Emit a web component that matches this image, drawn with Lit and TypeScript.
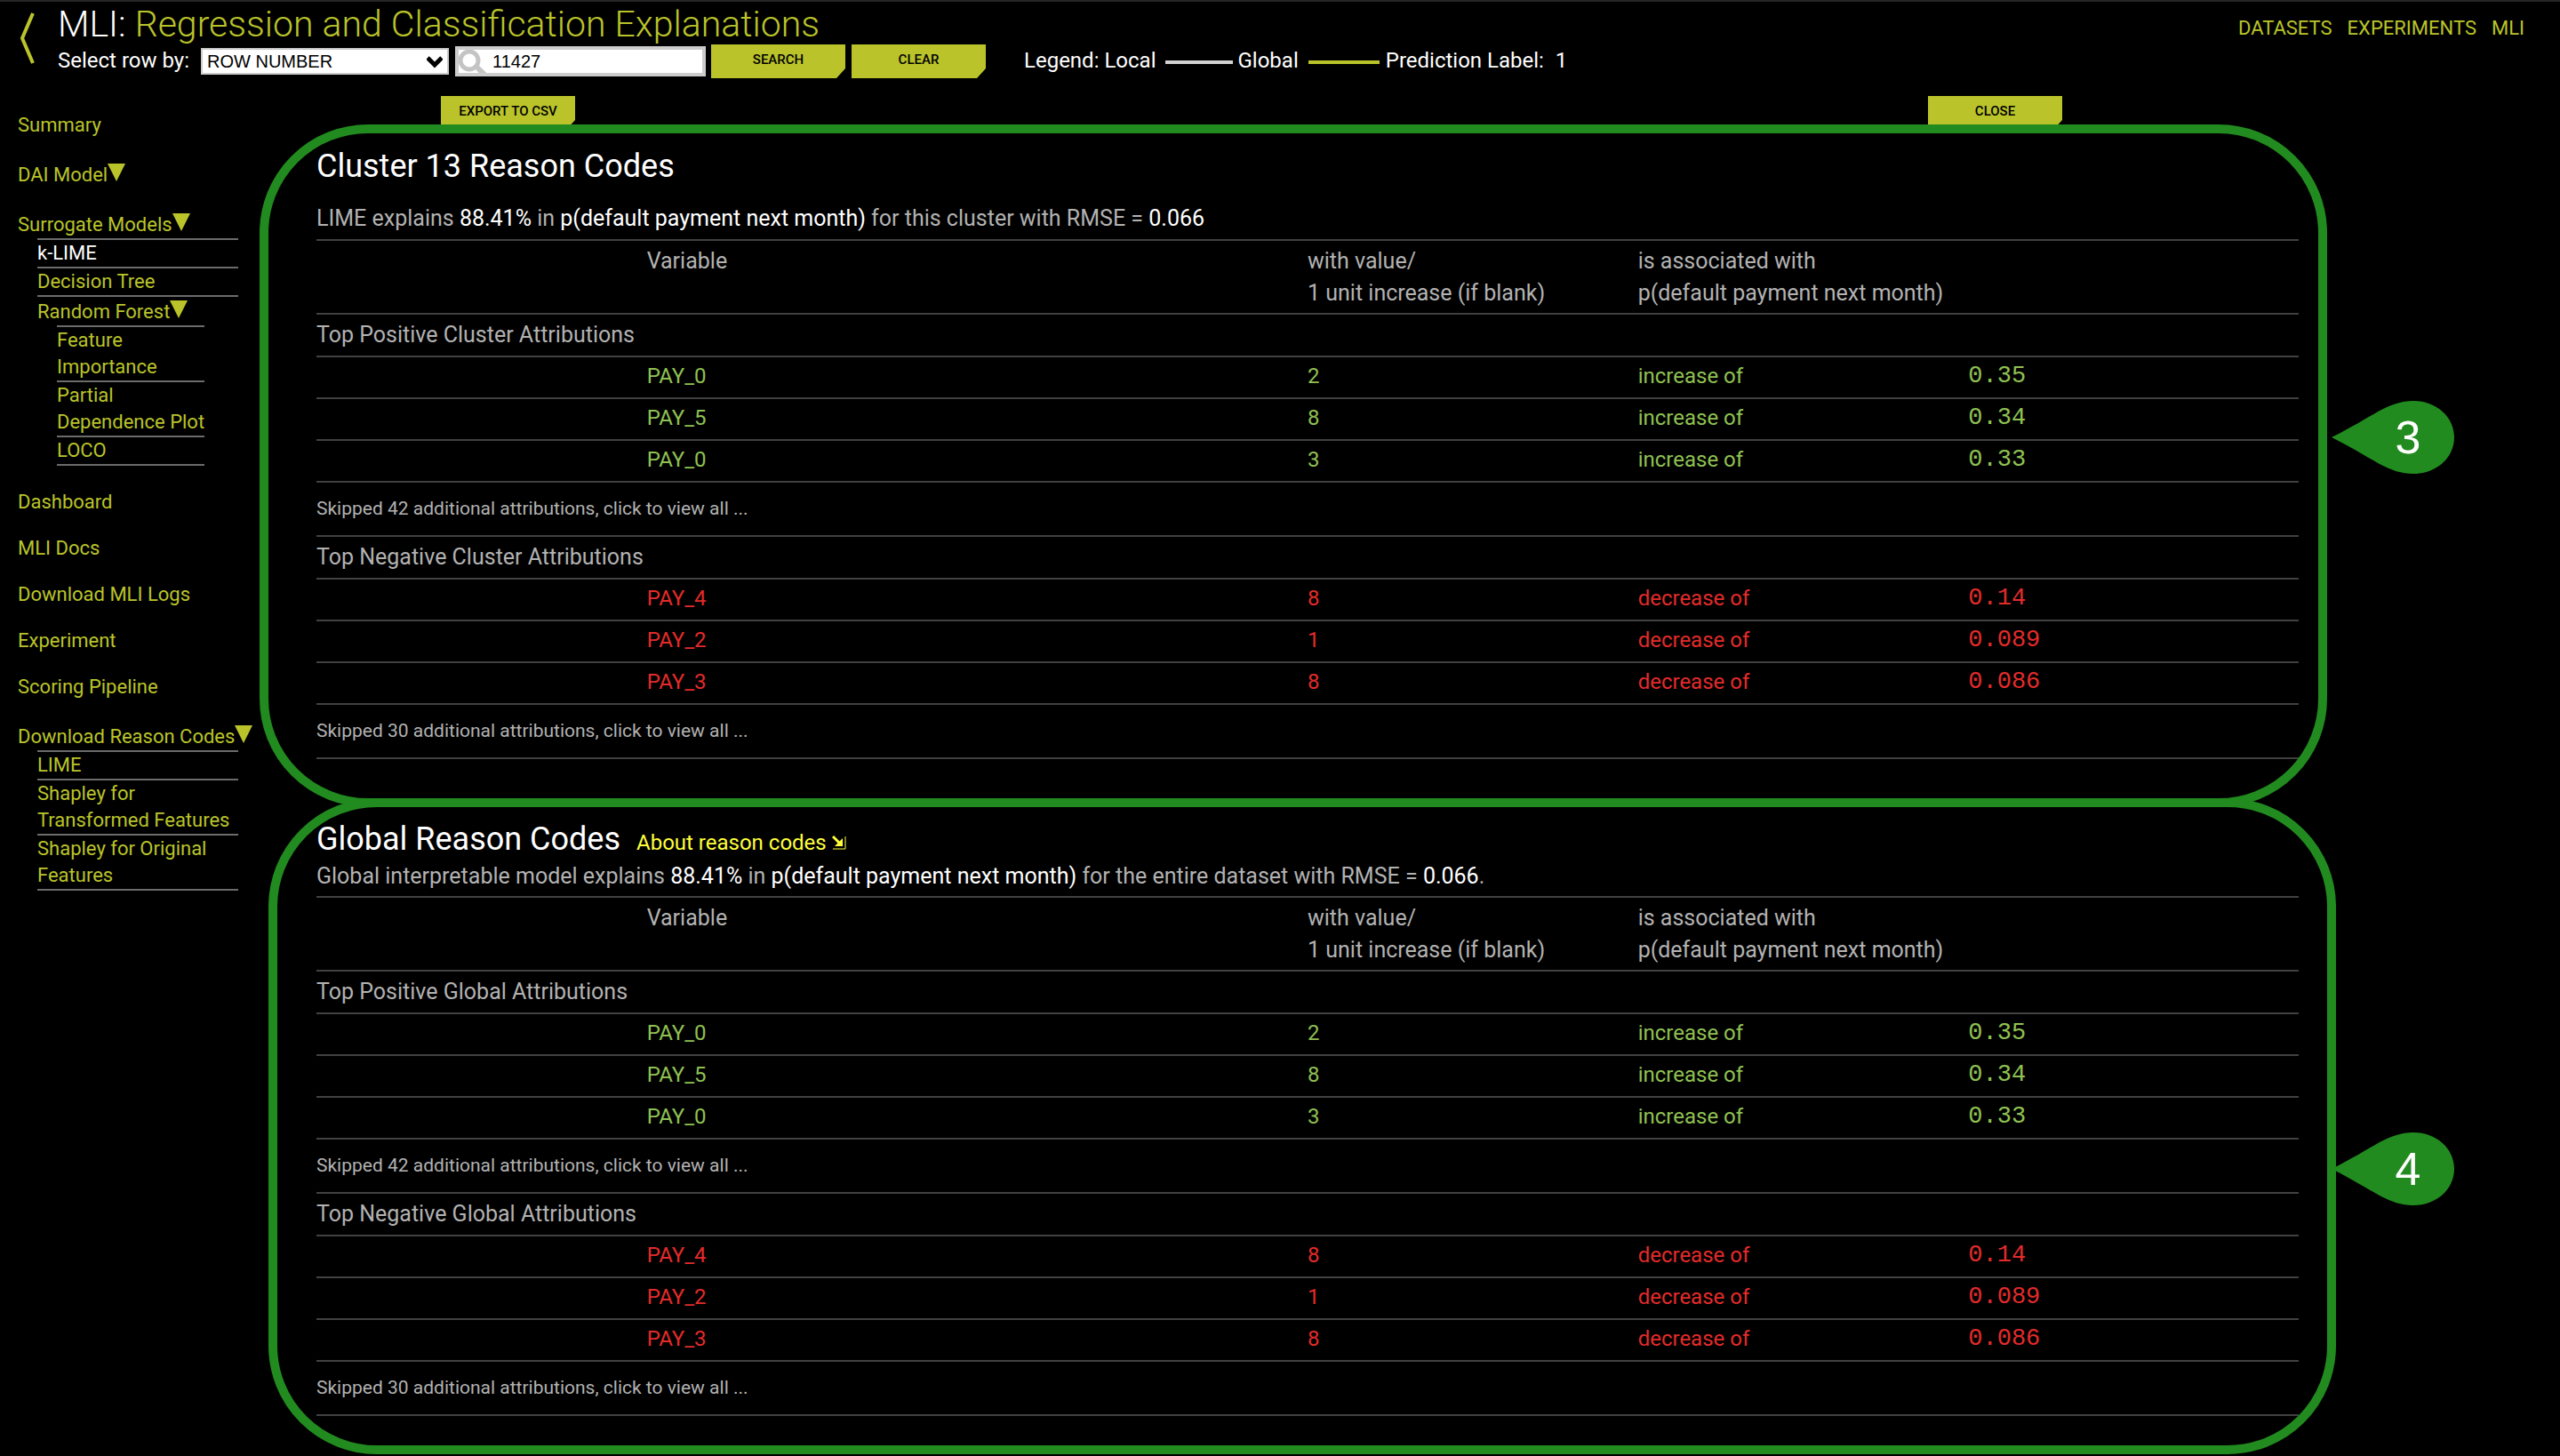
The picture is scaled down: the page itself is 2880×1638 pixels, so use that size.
import { LitElement, html, css, svg, nothing } from "lit";
import { customElement, property } from "lit/decorators.js";
import { classMap } from "lit/directives/class-map.js";

type Tone = "up" | "down";

interface Attribution {
  variable: string;
  value: string;
  effect: string;
  amount: string;
}

interface AttributionGroup {
  title: string;
  tone: Tone;
  rows: Attribution[];
  skipped: string;
}

const POSITIVE: Attribution[] = [
  { variable: "PAY_0", value: "2", effect: "increase of", amount: "0.35" },
  { variable: "PAY_5", value: "8", effect: "increase of", amount: "0.34" },
  { variable: "PAY_0", value: "3", effect: "increase of", amount: "0.33" },
];

const NEGATIVE: Attribution[] = [
  { variable: "PAY_4", value: "8", effect: "decrease of", amount: "0.14" },
  { variable: "PAY_2", value: "1", effect: "decrease of", amount: "0.089" },
  { variable: "PAY_3", value: "8", effect: "decrease of", amount: "0.086" },
];

const groupsFor = (scope: string): AttributionGroup[] => [
  {
    title: `Top Positive ${scope} Attributions`,
    tone: "up",
    rows: POSITIVE,
    skipped: "Skipped 42 additional attributions, click to view all ...",
  },
  {
    title: `Top Negative ${scope} Attributions`,
    tone: "down",
    rows: NEGATIVE,
    skipped: "Skipped 30 additional attributions, click to view all ...",
  },
];

@customElement("reason-table")
export class ReasonTable extends LitElement {
  @property({ attribute: false }) groups: AttributionGroup[] = [];

  static styles = css`
    :host {
      display: block;
    }
    .table {
      width: 100%;
      border-collapse: separate;
      border-spacing: 0;
      table-layout: fixed;
      border-top: 2px solid #414141;
      color: #b2b2b2;
      font-size: 25px;
      line-height: 36px;
    }
    .narrow {
      width: 16.6667%;
    }
    .wide {
      width: 33.3333%;
    }
    th,
    td {
      box-sizing: border-box;
      border-bottom: 2px solid #414141;
      text-align: left;
      vertical-align: top;
      font-weight: 400;
    }
    th {
      padding: 5px 0 4px 0;
    }
    .group {
      padding-bottom: 5px;
    }
    .row td {
      padding: 3px 0 6px 0;
      font-size: 24px;
    }
    .up {
      color: #8fc152;
    }
    .down {
      color: #e32b2b;
    }
    .row .amount {
      font-family: "Liberation Mono", monospace;
      font-size: 27px;
    }
    .skip {
      padding: 14px 0 15px 0;
    }
    .more {
      display: block;
      padding: 0;
      border: 0;
      background: none;
      color: #b2b2b2;
      font: 400 21px/30px Roboto, sans-serif;
      cursor: pointer;
    }
  `;

  render() {
    return html`
      <table class="table">
        <colgroup>
          <col class="narrow" />
          <col class="wide" />
          <col class="narrow" />
          <col class="narrow" />
          <col class="narrow" />
        </colgroup>
        <thead>
          <tr>
            <td></td>
            <th scope="col">Variable</th>
            <th scope="col">with value/<br />1 unit increase (if blank)</th>
            <th scope="col" colspan="2">
              is associated with<br />p(default payment next month)
            </th>
          </tr>
        </thead>
        ${this.groups.map(
          (group) => html`
            <tbody>
              <tr>
                <th class="group" scope="rowgroup" colspan="5">${group.title}</th>
              </tr>
              ${group.rows.map(
                (row) => html`
                  <tr class=${classMap({ row: true, [group.tone]: true })}>
                    <td></td>
                    <td>${row.variable}</td>
                    <td>${row.value}</td>
                    <td>${row.effect}</td>
                    <td class="amount">${row.amount}</td>
                  </tr>
                `
              )}
              <tr>
                <td class="skip" colspan="5">
                  <button class="more" type="button">${group.skipped}</button>
                </td>
              </tr>
            </tbody>
          `
        )}
      </table>
    `;
  }
}

@customElement("step-marker")
export class StepMarker extends LitElement {
  @property() label = "";

  static styles = css`
    :host {
      display: block;
    }
    .marker {
      display: grid;
      place-items: center;
      width: 138px;
      height: 82px;
    }
    .drop,
    .label {
      grid-area: 1 / 1;
    }
    .drop {
      display: block;
      fill: #228b1f;
    }
    .label {
      padding-left: 34px;
      color: #fff;
      font: 400 52px/82px "Liberation Sans", sans-serif;
    }
  `;

  render() {
    return html`
      <div class="marker">
        <svg class="drop" width="138" height="82" viewBox="0 0 138 82" aria-hidden="true">
          <path
            d="M0 41 C24 29 38 20 54 11 C68 4 78 0 92 0 C118 0 138 18 138 41 C138 64 118 82 92 82 C78 82 68 78 54 71 C38 62 24 53 0 41 Z"
          />
        </svg>
        <span class="label">${this.label}</span>
      </div>
    `;
  }
}

interface NavEntry {
  lines: string[];
  current?: boolean;
  children?: NavEntry[];
  expandable?: boolean;
}

const NAV: NavEntry[] = [
  { lines: ["Summary"] },
  { lines: ["DAI Model"], expandable: true },
  {
    lines: ["Surrogate Models"],
    expandable: true,
    children: [
      { lines: ["k-LIME"], current: true },
      { lines: ["Decision Tree"] },
      {
        lines: ["Random Forest"],
        expandable: true,
        children: [
          { lines: ["Feature", "Importance"] },
          { lines: ["Partial", "Dependence Plot"] },
          { lines: ["LOCO"] },
        ],
      },
    ],
  },
  { lines: ["Dashboard"] },
  { lines: ["MLI Docs"] },
  { lines: ["Download MLI Logs"] },
  { lines: ["Experiment"] },
  { lines: ["Scoring Pipeline"] },
  {
    lines: ["Download Reason Codes"],
    expandable: true,
    children: [
      { lines: ["LIME"] },
      { lines: ["Shapley for", "Transformed Features"] },
      { lines: ["Shapley for Original", "Features"] },
    ],
  },
];

@customElement("side-nav")
export class SideNav extends LitElement {
  static styles = css`
    :host {
      display: block;
    }
    ul {
      margin: 0;
      padding: 0;
      list-style: none;
    }
    .top {
      display: flex;
      flex-direction: column;
      gap: 22px;
      font-size: 22px;
      line-height: 30px;
    }
    .sub {
      width: 226px;
      margin-left: 22px;
      border-top: 2px solid #6b6b6b;
    }
    .top > .open {
      padding-bottom: 4px;
    }
    .sub .sub {
      width: 166px;
    }
    .sub li:not(.open) {
      border-bottom: 2px solid #6b6b6b;
    }
    .link {
      display: flex;
      color: #bac42a;
      text-decoration: none;
      white-space: nowrap;
    }
    .expandable {
      padding-top: 4px;
    }
    .sub .expandable {
      padding-top: 2px;
    }
    .current {
      color: #fff;
    }
    .arrow {
      flex: none;
      width: 20px;
      height: 20px;
      margin-top: 2px;
      fill: #bac42a;
    }
  `;

  private entry(item: NavEntry): unknown {
    return html`
      <li class=${classMap({ open: !!item.children })}>
        <a
          class=${classMap({ link: true, current: !!item.current, expandable: !!item.expandable })}
          href="#"
          ><span>${item.lines.map((line, i) => html`${i ? html`<br />` : nothing}${line}`)}</span>${item.expandable
            ? html`<svg class="arrow" viewBox="0 0 20 20" aria-hidden="true">
                <path d="M0 0H20L10 20Z" />
              </svg>`
            : nothing}</a
        >
        ${item.children
          ? html`<ul class="sub">
              ${item.children.map((child) => this.entry(child))}
            </ul>`
          : nothing}
      </li>
    `;
  }

  render() {
    return html`<nav>
      <ul class="top">
        ${NAV.map((item) => this.entry(item))}
      </ul>
    </nav>`;
  }
}

const chevronDown = svg`<path d="M1 2 L9 10 L17 2" fill="none" stroke="#000" stroke-width="5" />`;

@customElement("app-root")
export class AppRoot extends LitElement {
  static styles = css`
    :host {
      display: block;
      min-height: 100vh;
      background: #000;
      color: #fff;
      font-family: Roboto, sans-serif;
      font-size: 24px;
    }
    a {
      text-decoration: none;
    }
    .header {
      display: flex;
      align-items: flex-start;
      padding-top: 2px;
      border-top: 2px solid #262626;
    }
    .back {
      display: block;
      width: 18px;
      padding: 10px 25px 0 22px;
    }
    .back svg {
      display: block;
    }
    .lead {
      flex: 1;
    }
    .title {
      margin: 0;
      font-size: 41px;
      font-weight: 300;
      line-height: 46px;
    }
    .accent {
      color: #bac42a;
    }
    .controls {
      display: flex;
      align-items: flex-start;
      height: 38px;
      line-height: 36px;
    }
    .picker {
      position: relative;
      margin: 4px 7px 0 13px;
      line-height: 0;
    }
    .select {
      appearance: none;
      box-sizing: border-box;
      width: 279px;
      height: 30px;
      padding: 0 32px 0 5px;
      border: 2px solid #ccc;
      border-radius: 0;
      background: #fff;
      color: #000;
      font: 20px "Liberation Sans", sans-serif;
    }
    .chevron {
      position: absolute;
      right: 7px;
      top: 9px;
      pointer-events: none;
    }
    .search {
      display: flex;
      align-items: center;
      box-sizing: border-box;
      width: 282px;
      height: 34px;
      margin: 2px 6px 0 0;
      border: 4px solid #ccc;
      background: #fff;
      overflow: hidden;
    }
    .search svg {
      flex: none;
    }
    .input {
      flex: 1;
      min-width: 0;
      height: 26px;
      padding: 0 0 0 6px;
      border: 0;
      outline: 0;
      background: none;
      color: #000;
      font: 20px "Liberation Sans", sans-serif;
    }
    .button {
      width: 151px;
      height: 38px;
      margin-right: 7px;
      padding: 0 0 4px 0;
      border: 0;
      background: #bac42a;
      color: #000;
      font: 500 15px/34px Roboto, sans-serif;
      clip-path: polygon(0 0, 100% 0, 100% 27px, calc(100% - 10px) 100%, 0 100%);
    }
    .legend {
      display: flex;
      margin-left: 36px;
    }
    .swatch {
      width: 76px;
      height: 4px;
      margin: 18px 5px 0 11px;
      background: #d2d2d2;
    }
    .global {
      width: 80px;
      margin-right: 7px;
      background: #bac42a;
    }
    .label {
      margin-right: 13px;
    }
    .menu {
      display: flex;
      gap: 17px;
      padding: 10px 40px 0 0;
      font-size: 22px;
      line-height: 36px;
    }
    .menu a {
      color: #bac42a;
    }
    .body {
      display: flex;
      align-items: flex-start;
    }
    .side {
      flex: none;
      box-sizing: border-box;
      width: 292px;
      padding: 38px 0 0 20px;
    }
    .main {
      flex: 1;
      min-width: 0;
      padding: 20px 252px 0 0;
    }
    .actions {
      display: flex;
      justify-content: space-between;
      height: 32px;
      padding: 0 301px 0 204px;
    }
    .panel {
      position: relative;
      box-sizing: border-box;
    }
    .panel::after {
      content: "";
      position: absolute;
      inset: 0;
      border: 10px solid #228b1f;
      border-radius: 122px;
      pointer-events: none;
    }
    .cluster {
      margin-right: 10px;
      padding: 23px 32px 54px 64px;
    }
    .overall {
      margin: -10px 0 0 10px;
      padding: 22px 42px 43px 54px;
    }
    .heading {
      margin: 0;
      font-size: 36px;
      font-weight: 400;
      line-height: 48px;
    }
    .headline {
      display: flex;
      align-items: baseline;
      gap: 18px;
    }
    .about {
      color: #ffff3c;
    }
    .summary {
      margin: 0;
      padding: 17px 0 5px 0;
      color: #b2b2b2;
      font-size: 25px;
      line-height: 36px;
    }
    .overall .summary {
      padding: 0 0 4px 0;
    }
    .summary b {
      color: #fff;
      font-weight: 400;
    }
    .marker {
      position: absolute;
      z-index: 1;
      top: 311px;
      right: -143px;
    }
    .overall .marker {
      top: 376px;
      right: -133px;
    }
  `;

  render() {
    return html`
      <header class="header">
        <a class="back" href="#" aria-label="Back">
          <svg width="18" height="58" viewBox="0 0 18 58" aria-hidden="true">
            <path d="M15 1 L3 29 L15 57" fill="none" stroke="#bac42a" stroke-width="4" />
          </svg>
        </a>
        <div class="lead">
          <h1 class="title">
            MLI: <span class="accent">Regression and Classification Explanations</span>
          </h1>
          <form class="controls">
            <label for="row-by">Select row by:</label>
            <span class="picker">
              <select class="select" id="row-by">
                <option>ROW NUMBER</option>
              </select>
              <svg class="chevron" width="18" height="14" viewBox="0 0 18 14" aria-hidden="true">
                ${chevronDown}
              </svg>
            </span>
            <span class="search">
              <svg width="32" height="26" viewBox="0 0 32 26" aria-hidden="true">
                <circle cx="12" cy="12" r="10" fill="none" stroke="#c4c4c4" stroke-width="5" />
                <path d="M19 18 L30 29" stroke="#c4c4c4" stroke-width="6" />
              </svg>
              <input class="input" type="text" aria-label="Row number" .value=${"11427"} />
            </span>
            <button class="button" type="button">SEARCH</button>
            <button class="button" type="button">CLEAR</button>
            <div class="legend">
              <span>Legend: Local</span>
              <span class="swatch"></span>
              <span>Global</span>
              <span class="swatch global"></span>
              <span class="label">Prediction Label:</span>
              <span>1</span>
            </div>
          </form>
        </div>
        <nav class="menu">
          <a href="#">DATASETS</a>
          <a href="#">EXPERIMENTS</a>
          <a href="#">MLI</a>
        </nav>
      </header>
      <div class="body">
        <side-nav class="side"></side-nav>
        <main class="main">
          <div class="actions">
            <button class="button" type="button">EXPORT TO CSV</button>
            <button class="button" type="button">CLOSE</button>
          </div>
          <section class="panel cluster">
            <h2 class="heading">Cluster 13 Reason Codes</h2>
            <p class="summary">
              LIME explains <b>88.41%</b> in <b>p(default payment next month)</b> for this cluster
              with RMSE = <b>0.066</b>
            </p>
            <reason-table .groups=${groupsFor("Cluster")}></reason-table>
            <step-marker class="marker" label="3"></step-marker>
          </section>
          <section class="panel overall">
            <div class="headline">
              <h2 class="heading">Global Reason Codes</h2>
              <a class="about" href="#"
                >About reason codes
                <svg width="16" height="17" viewBox="0 0 16 17" aria-hidden="true">
                  <path d="M1 2 L10 11" fill="none" stroke="#ffff3c" stroke-width="3" />
                  <path d="M12 4 V13 H3 Z" fill="#ffff3c" />
                  <path d="M1 16 H15 V2" fill="none" stroke="#ffff3c" stroke-width="1" />
                </svg>
              </a>
            </div>
            <p class="summary">
              Global interpretable model explains <b>88.41%</b> in
              <b>p(default payment next month)</b> for the entire dataset with RMSE =
              <b>0.066</b>.
            </p>
            <reason-table .groups=${groupsFor("Global")}></reason-table>
            <step-marker class="marker" label="4"></step-marker>
          </section>
        </main>
      </div>
    `;
  }
}
